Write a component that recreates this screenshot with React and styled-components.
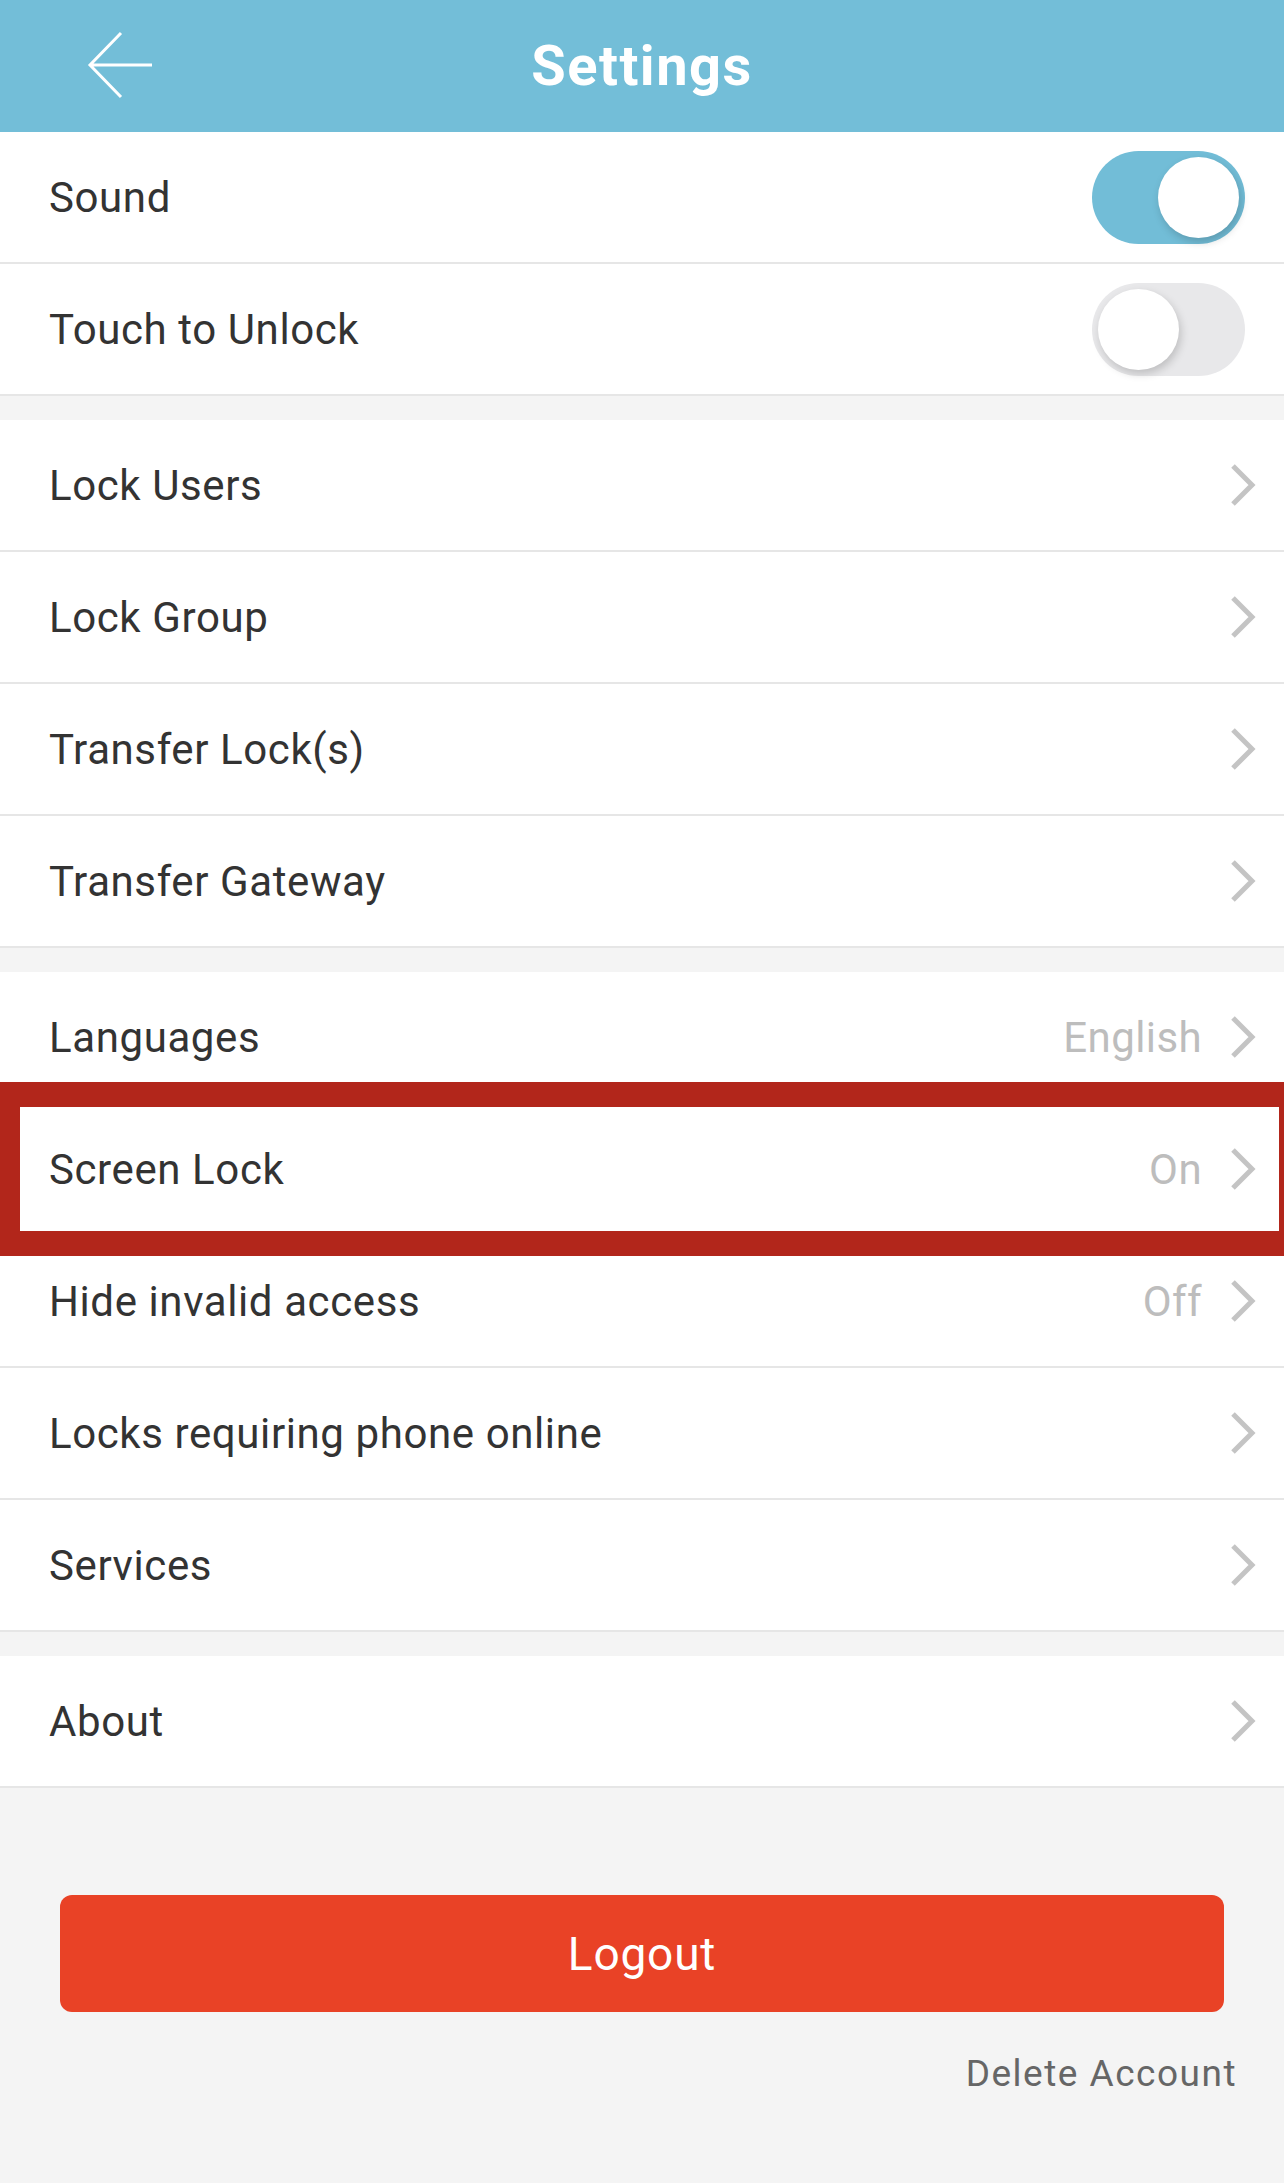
import React, { useState } from 'react'
import styled, { createGlobalStyle } from 'styled-components'

const GlobalStyle = createGlobalStyle`
  html, body {
    margin: 0;
    padding: 0;
    background: #f4f4f4;
    overflow-x: hidden;
  }
  body {
    font-family: Roboto, "Liberation Sans", sans-serif;
    -webkit-font-smoothing: antialiased;
  }
`

const Page = styled.div`
  width: 1284px;
  min-height: 2183px;
  background: #f4f4f4;
`

const Header = styled.header`
  height: 132px;
  background: #73bed8;
  display: flex;
  align-items: center;
  justify-content: center;
  position: relative;
`

const BackButton = styled.button`
  position: absolute;
  left: 80px;
  top: 28px;
  width: 80px;
  height: 76px;
  padding: 0;
  border: none;
  background: none;
  cursor: pointer;
`

const Title = styled.h1`
  margin: 0;
  color: #fff;
  font-size: 56px;
  font-weight: 700;
  letter-spacing: 1.5px;
`

const Group = styled.section`
  background: #fff;
  margin-bottom: 24px;
`

const Row = styled.div`
  height: 130px;
  display: flex;
  align-items: center;
  padding: 0 27px 0 49px;
  border-bottom: 2px solid #e6e6e6;
  position: relative;
`

const Label = styled.span`
  flex: 1;
  font-size: 42px;
  color: #333;
  letter-spacing: 0.6px;
`

const Value = styled.span`
  font-size: 42px;
  color: #bdbdbd;
  margin-right: 27px;
  letter-spacing: 0.4px;
`

const Track = styled.button`
  width: 153px;
  height: 93px;
  border-radius: 47px;
  border: none;
  padding: 0;
  margin-right: 12px;
  position: relative;
  cursor: pointer;
  background: ${p => (p.$on ? '#72bdd7' : '#e8e8ea')};
`

const Knob = styled.span`
  position: absolute;
  top: 6px;
  left: ${p => (p.$on ? '66px' : '6px')};
  width: 81px;
  height: 81px;
  border-radius: 50%;
  background: #fff;
  box-shadow: 2px 4px 8px rgba(0, 0, 0, 0.18);
`

const Highlight = styled.div`
  position: absolute;
  top: -22px;
  bottom: -22px;
  left: -5px;
  right: -20px;
  border: 25px solid #b2261b;
  pointer-events: none;
`

const Footer = styled.div`
  padding: 83px 60px 0;
  display: flex;
  flex-direction: column;
  align-items: stretch;
`

const LogoutButton = styled.button`
  height: 117px;
  border: none;
  border-radius: 12px;
  background: #e94226;
  color: #fff;
  font-family: Roboto, "Liberation Sans", sans-serif;
  font-size: 46px;
  letter-spacing: 0.8px;
  cursor: pointer;
`

const DeleteLink = styled.a`
  align-self: flex-end;
  margin: 40px -13px 0 0;
  font-size: 37px;
  color: #666;
  letter-spacing: 1.5px;
  cursor: pointer;
`

const Chevron = () => (
  <svg width="28" height="44" viewBox="0 0 28 44">
    <path d="M4 3 L23 22 L4 41" fill="none" stroke="#c4c4c4" strokeWidth="5" />
  </svg>
)

const BackArrow = () => (
  <svg width="80" height="76" viewBox="0 0 80 76">
    <path d="M10 37 L72 37 M41 5 L10 37 L41 69" fill="none" stroke="#fff" strokeWidth="3" />
  </svg>
)

const ToggleRow = ({ label, initial }) => {
  const [on, setOn] = useState(initial)
  return (
    <Row>
      <Label>{label}</Label>
      <Track $on={on} onClick={() => setOn(!on)}>
        <Knob $on={on} />
      </Track>
    </Row>
  )
}

const LinkRow = ({ label, value, highlighted }) => (
  <Row>
    <Label>{label}</Label>
    {value && <Value>{value}</Value>}
    <Chevron />
    {highlighted && <Highlight />}
  </Row>
)

export default function App() {
  return (
    <Page>
      <GlobalStyle />
      <Header>
        <BackButton aria-label="Back">
          <BackArrow />
        </BackButton>
        <Title>Settings</Title>
      </Header>
      <Group>
        <ToggleRow label="Sound" initial={true} />
        <ToggleRow label="Touch to Unlock" initial={false} />
      </Group>
      <Group>
        <LinkRow label="Lock Users" />
        <LinkRow label="Lock Group" />
        <LinkRow label="Transfer Lock(s)" />
        <LinkRow label="Transfer Gateway" />
      </Group>
      <Group>
        <LinkRow label="Languages" value="English" />
        <LinkRow label="Screen Lock" value="On" highlighted />
        <LinkRow label="Hide invalid access" value="Off" />
        <LinkRow label="Locks requiring phone online" />
        <LinkRow label="Services" />
      </Group>
      <Group>
        <LinkRow label="About" />
      </Group>
      <Footer>
        <LogoutButton>Logout</LogoutButton>
        <DeleteLink>Delete Account</DeleteLink>
      </Footer>
    </Page>
  )
}
